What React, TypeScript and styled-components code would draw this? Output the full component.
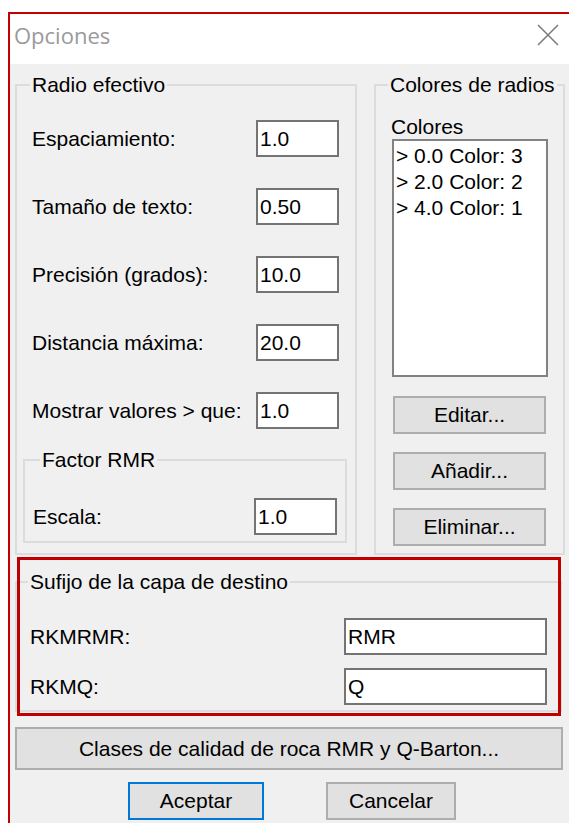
import React from "react";
import styled, { createGlobalStyle } from "styled-components";

const GlobalStyle = createGlobalStyle`
  html, body {
    margin: 0;
    padding: 0;
    background: #ffffff;
    overflow: hidden;
  }
  body {
    font-family: "Liberation Sans", Arial, sans-serif;
    color: #000000;
  }
  * {
    box-sizing: border-box;
  }
`;

const Window = styled.div`
  margin: 12px 0 0 8px;
  min-height: calc(100vh - 12px);
  border-top: 2px solid #c40000;
  border-left: 2px solid #c40000;
  background: #f0f0f0;
  display: flex;
  flex-direction: column;
`;

const TitleBar = styled.div`
  flex-shrink: 0;
  height: 50px;
  padding: 0 10px 8px 4px;
  background: #ffffff;
  display: flex;
  align-items: center;
  justify-content: space-between;
`;

const Title = styled.span`
  font-family: "Open Sans", "Noto Sans", sans-serif;
  font-size: 22px;
  color: #9a9a9a;
`;

const DialogBody = styled.div`
  flex-shrink: 0;
  padding: 10px 6px 0 5px;
  display: flex;
  flex-direction: column;
  font-size: 21px;
`;

const TopGrid = styled.div`
  display: grid;
  grid-template-columns: 342px 191px;
  column-gap: 17px;
`;

const GroupBox = styled.fieldset<{ $pad: string }>`
  margin: 0;
  min-width: 0;
  border: 2px solid #dcdcdc;
  padding: ${(p) => p.$pad};
`;

const GroupTitle = styled.legend<{ $indent: number }>`
  margin-left: ${(p) => p.$indent}px;
  padding: 0 2px;
  font-size: 21px;
  line-height: 22px;
  white-space: nowrap;
`;

const FieldStack = styled.div<{ $gap: number; $indent: number }>`
  display: flex;
  flex-direction: column;
  gap: ${(p) => p.$gap}px;
  padding-left: ${(p) => p.$indent}px;
`;

const FieldRow = styled.div<{ $label: string; $input: number }>`
  display: grid;
  grid-template-columns: ${(p) => p.$label} ${(p) => p.$input}px;
  align-items: center;
`;

const Label = styled.span`
  line-height: 22px;
  white-space: nowrap;
`;

const TextBox = styled.input`
  height: 37px;
  width: 100%;
  margin: 0;
  padding: 0 2px;
  border: 2px solid #747474;
  border-radius: 0;
  background: #ffffff;
  font: inherit;
  color: #000000;
  outline: none;
`;

const SubGroup = styled(GroupBox)`
  margin-top: 20px;
`;

const ColorPanel = styled.div`
  padding-left: 15px;
`;

const ListCaption = styled.div`
  line-height: 22px;
`;

const ListBox = styled.ul`
  margin: 1px 0 0 1px;
  padding: 2px;
  list-style: none;
  width: 156px;
  height: 238px;
  border: 2px solid #828282;
  background: #ffffff;
`;

const ListItem = styled.li`
  line-height: 26px;
  white-space: nowrap;
`;

const ButtonStack = styled.div`
  margin-top: 19px;
  padding-left: 2px;
  display: flex;
  flex-direction: column;
  gap: 18px;
`;

const PushButton = styled.button<{ $width: number; $height: number; $default?: boolean }>`
  width: ${(p) => p.$width}px;
  height: ${(p) => p.$height}px;
  margin: 0;
  padding: 0;
  border: 2px solid ${(p) => (p.$default ? "#0078d7" : "#adadad")};
  border-radius: 0;
  background: #e1e1e1;
  font: inherit;
  color: #000000;
`;

// red frame drawn over the destination-suffix group
const Highlight = styled.div`
  position: relative;
  margin-top: 16px;
  width: 547px;

  &::after {
    content: "";
    position: absolute;
    top: -14px;
    left: 2px;
    right: 1px;
    bottom: -4px;
    border: 3px solid #c00000;
    pointer-events: none;
  }
`;

const WideButtonRow = styled.div`
  margin-top: 15px;
`;

const Footer = styled.div`
  margin-top: 12px;
  padding-left: 113px;
  display: flex;
  gap: 62px;
`;

function CloseIcon() {
  return (
    <svg width="22" height="22" viewBox="0 0 22 22">
      <path d="M1 1 L21 21 M21 1 L1 21" stroke="#7d7d7d" strokeWidth="1.6" fill="none" />
    </svg>
  );
}

const radioFields = [
  { label: "Espaciamiento:", value: "1.0" },
  { label: "Tamaño de texto:", value: "0.50" },
  { label: "Precisión (grados):", value: "10.0" },
  { label: "Distancia máxima:", value: "20.0" },
  { label: "Mostrar valores > que:", value: "1.0" },
];

const colorRanges = ["> 0.0 Color: 3", "> 2.0 Color: 2", "> 4.0 Color: 1"];

export default function App() {
  return (
    <>
      <GlobalStyle />
      <Window>
        <TitleBar>
          <Title>Opciones</Title>
          <CloseIcon />
        </TitleBar>
        <DialogBody>
          <TopGrid>
            <GroupBox $pad="24px 8px 10px 6px">
              <GroupTitle $indent={7}>Radio efectivo</GroupTitle>
              <FieldStack $gap={31} $indent={9}>
                {radioFields.map((f) => (
                  <FieldRow key={f.label} $label="224px" $input={83}>
                    <Label>{f.label}</Label>
                    <TextBox readOnly value={f.value} />
                  </FieldRow>
                ))}
              </FieldStack>
              <SubGroup $pad="27px 8px 6px 8px">
                <GroupTitle $indent={7}>Factor RMR</GroupTitle>
                <FieldRow $label="221px" $input={83}>
                  <Label>Escala:</Label>
                  <TextBox readOnly value="1.0" />
                </FieldRow>
              </SubGroup>
            </GroupBox>
            <GroupBox $pad="20px 0 0 0">
              <GroupTitle $indent={12}>Colores de radios</GroupTitle>
              <ColorPanel>
                <ListCaption>Colores</ListCaption>
                <ListBox>
                  {colorRanges.map((c) => (
                    <ListItem key={c}>{c}</ListItem>
                  ))}
                </ListBox>
                <ButtonStack>
                  <PushButton $width={153} $height={38}>Editar...</PushButton>
                  <PushButton $width={153} $height={38}>Añadir...</PushButton>
                  <PushButton $width={153} $height={38}>Eliminar...</PushButton>
                </ButtonStack>
              </ColorPanel>
            </GroupBox>
          </TopGrid>
          <Highlight>
            <GroupBox $pad="25px 13px 5px 13px">
              <GroupTitle $indent={-2}>Sufijo de la capa de destino</GroupTitle>
              <FieldStack $gap={13} $indent={0}>
                <FieldRow $label="1fr" $input={203}>
                  <Label>RKMRMR:</Label>
                  <TextBox readOnly value="RMR" />
                </FieldRow>
                <FieldRow $label="1fr" $input={203}>
                  <Label>RKMQ:</Label>
                  <TextBox readOnly value="Q" />
                </FieldRow>
              </FieldStack>
            </GroupBox>
          </Highlight>
          <WideButtonRow>
            <PushButton $width={548} $height={43}>
              Clases de calidad de roca RMR y Q-Barton...
            </PushButton>
          </WideButtonRow>
          <Footer>
            <PushButton $width={136} $height={38} $default>
              Aceptar
            </PushButton>
            <PushButton $width={130} $height={38}>
              Cancelar
            </PushButton>
          </Footer>
        </DialogBody>
      </Window>
    </>
  );
}
